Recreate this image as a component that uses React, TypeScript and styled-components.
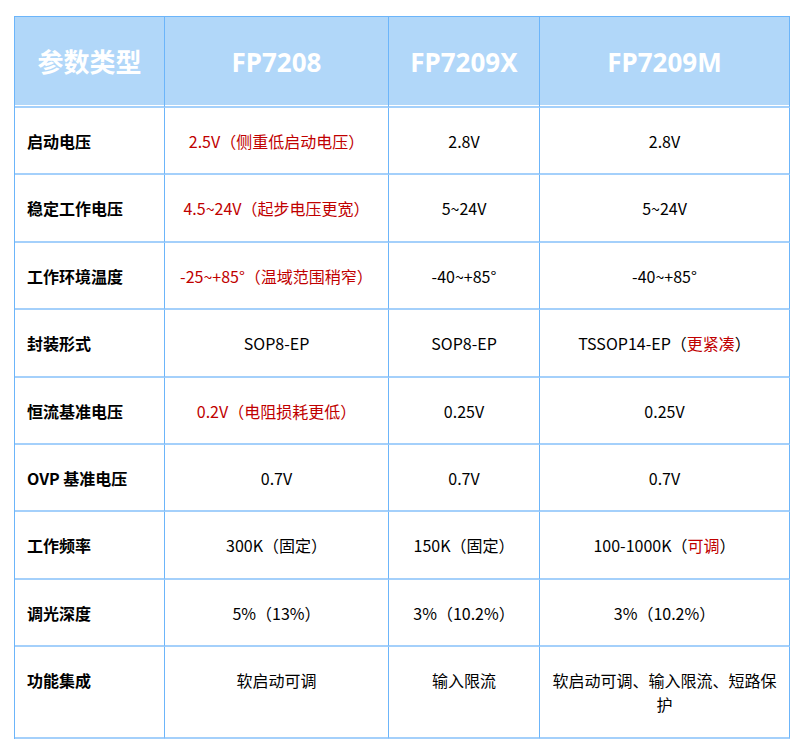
import React from "react";
import styled, { createGlobalStyle } from "styled-components";

const GlobalStyle = createGlobalStyle`
    html, body {
        margin: 0;
        padding: 0;
        background: #fff;
    }
    body {
        font-family: "Noto Sans CJK SC", "Noto Sans", sans-serif;
    }
`;

type Part = { text: string; red?: boolean };
type Cell = Part[];
type Row = { label: string; cells: Cell[] };

const plain = (text: string): Cell => [{ text }];
const red = (text: string): Cell => [{ text, red: true }];

const columns = ["FP7208", "FP7209X", "FP7209M"];
const colWidths = [150, 224, 151, 250];

const rows: Row[] = [
    { label: "启动电压", cells: [red("2.5V（侧重低启动电压）"), plain("2.8V"), plain("2.8V")] },
    { label: "稳定工作电压", cells: [red("4.5~24V（起步电压更宽）"), plain("5~24V"), plain("5~24V")] },
    { label: "工作环境温度", cells: [red("-25~+85°（温域范围稍窄）"), plain("-40~+85°"), plain("-40~+85°")] },
    {
        label: "封装形式",
        cells: [
            plain("SOP8-EP"),
            plain("SOP8-EP"),
            [{ text: "TSSOP14-EP（" }, { text: "更紧凑", red: true }, { text: "）" }],
        ],
    },
    { label: "恒流基准电压", cells: [red("0.2V（电阻损耗更低）"), plain("0.25V"), plain("0.25V")] },
    { label: "OVP 基准电压", cells: [plain("0.7V"), plain("0.7V"), plain("0.7V")] },
    {
        label: "工作频率",
        cells: [
            plain("300K（固定）"),
            plain("150K（固定）"),
            [{ text: "100-1000K（" }, { text: "可调", red: true }, { text: "）" }],
        ],
    },
    { label: "调光深度", cells: [plain("5%（13%）"), plain("3%（10.2%）"), plain("3%（10.2%）")] },
    { label: "功能集成", cells: [plain("软启动可调"), plain("输入限流"), plain("软启动可调、输入限流、短路保护")] },
];

export default function App() {
    return (
        <>
            <GlobalStyle />
            <Page>
                <Table>
                    <colgroup>
                        {colWidths.map((w, i) => (
                            <Col key={i} $w={w} />
                        ))}
                    </colgroup>
                    <thead>
                        <tr>
                            <HeadCell>参数类型</HeadCell>
                            {columns.map((c) => (
                                <HeadCell key={c}>{c}</HeadCell>
                            ))}
                        </tr>
                    </thead>
                    <tbody>
                        {rows.map((row) => (
                            <tr key={row.label}>
                                <LabelCell>{row.label}</LabelCell>
                                {row.cells.map((cell, i) => (
                                    <ValueCell key={i}>
                                        {cell.map((p, j) => (
                                            <Part key={j} $red={p.red}>{p.text}</Part>
                                        ))}
                                    </ValueCell>
                                ))}
                            </tr>
                        ))}
                    </tbody>
                </Table>
            </Page>
        </>
    );
}

const Page = styled.div`
    padding: 16px 0 14px 14px;
`;

const Table = styled.table`
    width: 776px;
    table-layout: fixed;
    border-collapse: separate;
    border-spacing: 0;
    border-top: 1px solid #6cb5fa;
    border-left: 1px solid #6cb5fa;
`;

const Col = styled.col<{ $w: number }>`
    width: ${(p) => p.$w}px;
`;

const HeadCell = styled.th`
    background-color: #b1d7f9;
    color: #fff;
    font-family: "Noto Sans", "Noto Sans CJK SC", sans-serif;
    font-size: 26px;
    font-weight: 700;
    line-height: 32px;
    padding: 28.5px 0;
    text-align: center;
    border-right: 1px solid #6cb5fa;
    border-bottom: 2px solid #a4d0fb;
    box-shadow: inset 0 -1px 0 #fff;
`;

const BaseCell = styled.td`
    font-size: 16px;
    line-height: 24px;
    padding: 21px 12px 20.4px;
    vertical-align: top;
    color: #000;
    border-right: 1px solid #6cb5fa;
    border-bottom: 2px solid #a4d0fb;
`;

const LabelCell = styled(BaseCell)`
    font-weight: 700;
    text-align: left;
`;

const ValueCell = styled(BaseCell)`
    text-align: center;
`;

const Part = styled.span<{ $red?: boolean }>`
    color: ${(p) => (p.$red ? "#c00000" : "inherit")};
`;
